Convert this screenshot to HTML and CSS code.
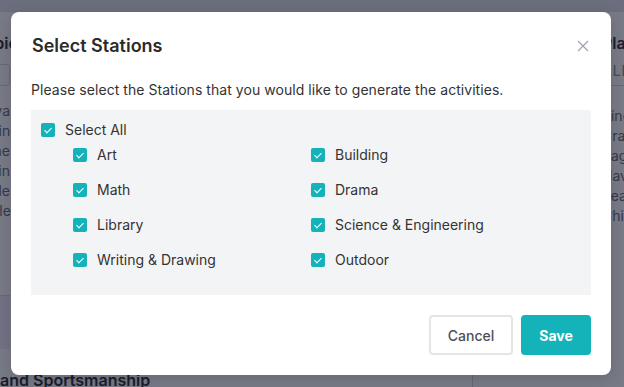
FILE: index.html
```html
<!DOCTYPE html>
<html lang="en">
<head>
    <meta charset="UTF-8">
    <title>Select Stations</title>
    <link rel="stylesheet" href="styles.css">
</head>
<body>
<div id="page">
    <div class="topbar"></div>
    <div class="board">
        <div class="card card-left">
            <h3 class="card-title">Outdoor Games Topic</h3>
            <div class="card-field"></div>
            <p class="card-text">Children explore a va</p>
            <p class="card-text">of movement and sharing</p>
            <p class="card-text">while playing with the</p>
            <p class="card-text">friends. Teachers join</p>
            <p class="card-text">the rules and guide</p>
            <p class="card-text">group and take turns clear</p>
            <div class="card-band"></div>
            <h3 class="card-foot">and Sportsmanship</h3>
        </div>
        <div class="card card-mid"></div>
        <div class="card card-right">
            <h3 class="card-title">Plans</h3>
            <div class="card-line">ALL</div>
            <p class="card-text">Sing</p>
            <p class="card-text">Craft</p>
            <p class="card-text">Pages</p>
            <p class="card-text">Have</p>
            <p class="card-text">Read</p>
            <p class="card-text">Child</p>
        </div>
    </div>
</div>
<div class="overlay"></div>

<div class="modal">
    <div class="modal-head">
        <h2 class="modal-title">Select Stations</h2>
        <a href="javascript:;" class="close">
            <svg width="12" height="12" viewBox="0 0 12 12"><path d="M1 1L11 11M11 1L1 11" stroke="#9ca3af" stroke-width="1.2" fill="none"/></svg>
        </a>
    </div>
    <p class="modal-desc">Please select the Stations that you would like to generate the activities.</p>
    <div class="panel">
        <label class="check"><span class="box"></span>Select All</label>
        <div class="stations">
            <label class="check"><span class="box"></span>Art</label>
            <label class="check"><span class="box"></span>Building</label>
            <label class="check"><span class="box"></span>Math</label>
            <label class="check"><span class="box"></span>Drama</label>
            <label class="check"><span class="box"></span>Library</label>
            <label class="check"><span class="box"></span>Science &amp; Engineering</label>
            <label class="check"><span class="box"></span>Writing &amp; Drawing</label>
            <label class="check"><span class="box"></span>Outdoor</label>
        </div>
    </div>
    <div class="modal-foot">
        <button class="btn btn-cancel">Cancel</button>
        <button class="btn btn-save">Save</button>
    </div>
</div>
</body>
</html>
```

FILE: styles.css
```css
*{margin: 0;padding: 0;box-sizing: border-box;}
body{width: 624px;height: 387px;overflow: hidden;font-family: Inter, "Noto Sans", sans-serif;color: #333;background: #fff;}

/* page behind the dialog */
#page{height: 387px;overflow: hidden;}
.topbar{height: 12px;background: #e2e6ec;}
.board{display: flex;gap: 10px;margin-left: -150px;}
.card{flex: none;background: #fff;}
.card-left{width: 160px;padding-top: 20px;text-align: right;}
.card-mid{border-left: 1px solid #d6d8de;margin-left: 452px;width: 118px;}
.card-right{width: 200px;padding: 20px 0 0 2px;}
.card-title{font-size: 16px;font-weight: 600;color: #2f3440;line-height: 22px;white-space: nowrap;}
.card-field{height: 22px;margin-top: 10px;border: 1px solid #d6d8de;border-radius: 4px;}
.card-line{margin-top: 8px;height: 24px;border-bottom: 1px solid #d6d8de;color: #8a8f99;font-size: 14px;letter-spacing: 1px;}
.card-text{font-size: 14px;line-height: 20px;color: #6b7280;white-space: nowrap;}
.card-field + .card-text{margin-top: 15px;}
.card-line + .card-text{margin-top: 20px;}
.card-band{height: 54px;margin-top: 74px;background: #f3eefc;border-top: 1px solid #d6d8de;}
.card-foot{font-size: 16px;font-weight: 600;color: #2f3440;margin-top: 21px;white-space: nowrap;text-align: left;margin-left: 150px;}

.overlay{position: absolute;top: 0;left: 0;width: 624px;height: 387px;background: rgba(10,13,35,0.55);}

/* dialog */
.modal{position: absolute;top: 12px;left: 11px;width: 600px;height: 363px;background: #fff;border-radius: 8px;padding: 20px;box-shadow: 0 4px 16px rgba(0,0,0,0.15);}
.modal-head{display: flex;justify-content: space-between;align-items: center;height: 28px;}
.modal-title{font-size: 18px;font-weight: 600;color: #2b2b2b;line-height: 28px;padding-left: 1px;}
.close{display: flex;margin-right: 2px;}
.modal-desc{font-size: 14px;line-height: 20px;margin-top: 20px;color: #333;letter-spacing: 0.05px;}
.panel{margin-top: 10px;height: 185px;background: #f3f4f6;padding: 10px 10px 0;}
.check{display: flex;align-items: center;gap: 10px;font-size: 14px;line-height: 20px;color: #333;}
.box{width: 14px;height: 14px;border-radius: 2px;background: #13b3b9;position: relative;flex: none;}
.box:after{content: "";position: absolute;left: 4.5px;top: 2.5px;width: 3px;height: 6px;border: solid #fff;border-width: 0 1.5px 1.5px 0;transform: rotate(45deg);}
.stations{display: grid;grid-template-columns: 238px 1fr;row-gap: 15px;margin: 5px 0 0 32px;}
.modal-foot{display: flex;justify-content: flex-end;gap: 8px;margin-top: 20px;}
.btn{height: 40px;border-radius: 4px;font-family: Inter, sans-serif;font-size: 14px;cursor: pointer;}
.btn-cancel{width: 84px;background: #fff;border: 2px solid #e3e5e9;color: #4b5058;font-weight: 500;}
.btn-save{width: 70px;background: #13b3b9;border: none;color: #fff;font-weight: 700;}
```
